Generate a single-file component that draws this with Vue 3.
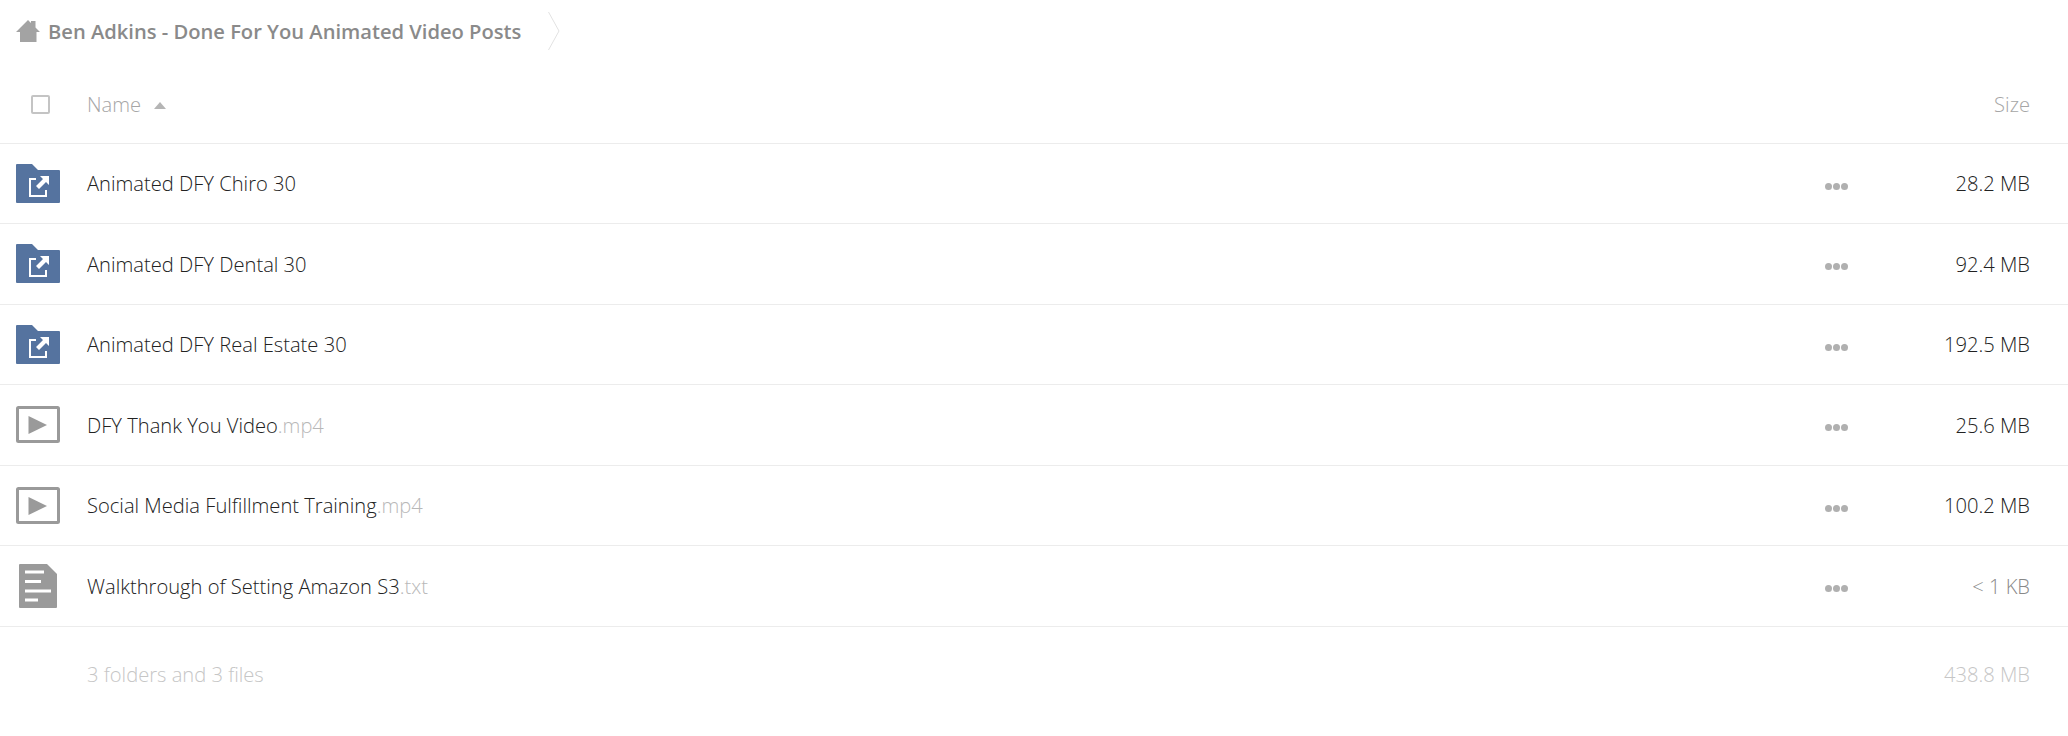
<template>
  <div class="files">
    <nav class="crumbs">
      <svg class="home" viewBox="0 0 24 22" width="24" height="22">
        <path d="M0 12 L12 0 L15 3 V1 H19.500 V7.500 L24 12 H20.500 V22 H4 V12 Z" fill="#a3a3a3" />
      </svg>
      <span class="crumb-name">Ben Adkins - Done For You Animated Video Posts</span>
      <svg class="chevron" viewBox="0 0 12 38" width="12" height="38">
        <path d="M0.500 0 L11 19 L0.500 38" fill="none" stroke="#e2e2e2" stroke-width="1" />
      </svg>
    </nav>

    <div class="row head">
      <span class="check-cell"><span class="checkbox"></span></span>
      <span class="name muted">Name<span class="sort-arrow"></span></span>
      <span class="size muted">Size</span>
    </div>

    <div v-for="file in files" :key="file.name" class="row">
      <span class="icon-cell">
        <svg v-if="file.type === 'folder'" viewBox="0 0 44 39" width="44" height="39">
          <path d="M0 1 Q0 0 1 0 H16 L22 6 H43 Q44 6 44 7 V38 Q44 39 43 39 H1 Q0 39 0 38 Z" fill="#55739f" />
          <path d="M20 15 H14 V32 H30 V26" fill="none" stroke="#fff" stroke-width="2" />
          <path d="M24 12 H33 V21 L30 18 L23 25 L20 22 L27 15 Z" fill="#fff" />
        </svg>
        <svg v-else-if="file.type === 'video'" viewBox="0 0 44 37" width="44" height="37">
          <rect x="1.500" y="1.500" width="41" height="34" fill="#fff" stroke="#9a9a9a" stroke-width="3" rx="1" />
          <path d="M12.500 10 L31 19 L12.500 28 Z" fill="#9a9a9a" />
        </svg>
        <svg v-else class="doc" viewBox="0 0 38 44" width="38" height="44">
          <path d="M1 0 H28 L38 10 V43 Q38 44 37 44 H1 Q0 44 0 43 V1 Q0 0 1 0 Z" fill="#9a9a9a" />
          <path d="M6 8 H25 M6 17.500 H22 M6 27 H32 M6 36 H19" stroke="#fff" stroke-width="3" fill="none" />
        </svg>
      </span>
      <span class="name">{{ file.name }}<span v-if="file.ext" class="ext">{{ file.ext }}</span></span>
      <span class="dots"><i></i><i></i><i></i></span>
      <span class="size" :class="{ small: file.size === '< 1 KB' }">{{ file.size }}</span>
    </div>

    <div class="summary">
      <span class="name">3 folders and 3 files</span>
      <span class="size">438.8 MB</span>
    </div>
  </div>
</template>

<script setup>
const files = [
  { type: 'folder', name: 'Animated DFY Chiro 30', size: '28.2 MB' },
  { type: 'folder', name: 'Animated DFY Dental 30', size: '92.4 MB' },
  { type: 'folder', name: 'Animated DFY Real Estate 30', size: '192.5 MB' },
  { type: 'video', name: 'DFY Thank You Video', ext: '.mp4', size: '25.6 MB' },
  { type: 'video', name: 'Social Media Fulfillment Training', ext: '.mp4', size: '100.2 MB' },
  { type: 'text', name: 'Walkthrough of Setting Amazon S3', ext: '.txt', size: '< 1 KB' }
]
</script>

<style>
html, body {
  background: #fff;
}
</style>

<style scoped>
.files {
  width: 2068px;
  height: 736px;
  overflow: hidden;
  font-family: "Open Sans", sans-serif;
  font-weight: 300;
  font-size: 20.15px;
  color: #222;
}

.crumbs {
  display: flex;
  align-items: center;
  height: 62px;
  padding-left: 16px;
}

.home {
  flex: none;
  margin-right: 8px;
}

.crumb-name {
  font-weight: 600;
  color: #8a8a8a;
}

.chevron {
  margin-left: 27px;
}

.row {
  display: flex;
  align-items: center;
  box-sizing: border-box;
  height: 80.5px;
  border-bottom: 1px solid #ececec;
}

.head {
  height: 81.500px;
  padding-top: 4px;
}

.check-cell {
  display: flex;
  width: 87px;
  padding-left: 31px;
  box-sizing: border-box;
}

.checkbox {
  box-sizing: border-box;
  width: 19px;
  height: 19px;
  border: 2px solid #c4c4c4;
  border-radius: 2px;
}

.icon-cell {
  display: flex;
  align-items: center;
  width: 87px;
  height: 100%;
  padding-left: 16px;
  box-sizing: border-box;
}

.doc {
  margin-left: 3px;
}

.name {
  flex: 1;
}

.muted {
  color: #a6a6a6;
}

.sort-arrow {
  display: inline-block;
  margin-left: 13px;
  vertical-align: 3px;
  border-left: 6.5px solid transparent;
  border-right: 6.5px solid transparent;
  border-bottom: 7px solid #b5b5b5;
}

.ext {
  color: #b8b8b8;
}

.dots {
  display: flex;
  gap: 1px;
  width: 23px;
  margin-top: 6px;
  margin-right: 70px;
}

.dots i {
  width: 7px;
  height: 7px;
  border-radius: 50%;
  background: #b0b0b0;
}

.size {
  width: 150px;
  padding-right: 38px;
  box-sizing: border-box;
  text-align: right;
}

.size.small {
  color: #888;
}

.summary {
  display: flex;
  align-items: center;
  height: 95px;
  padding-left: 87px;
  color: #c6c6c6;
}
</style>
